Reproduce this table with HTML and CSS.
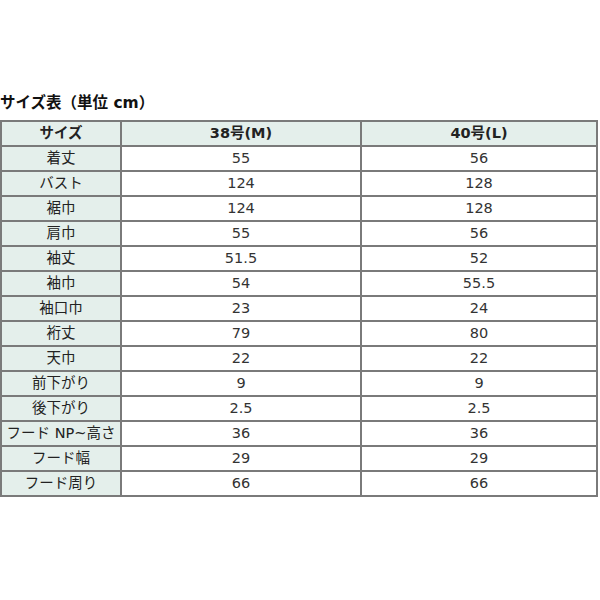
FILE: index.html
```html
<!DOCTYPE html>
<html lang="ja">
<head>
<meta charset="utf-8">
<title>サイズ表</title>
<link rel="stylesheet" href="styles.css">
</head>
<body>
<div class="page">
  <h2 class="title">サイズ表（単位 cm）</h2>
  <table class="size-table">
    <thead>
      <tr><th class="label">サイズ</th><th>38号(M)</th><th>40号(L)</th></tr>
    </thead>
    <tbody>
      <tr><th class="label">着丈</th><td>55</td><td>56</td></tr>
      <tr><th class="label">バスト</th><td>124</td><td>128</td></tr>
      <tr><th class="label">裾巾</th><td>124</td><td>128</td></tr>
      <tr><th class="label">肩巾</th><td>55</td><td>56</td></tr>
      <tr><th class="label">袖丈</th><td>51.5</td><td>52</td></tr>
      <tr><th class="label">袖巾</th><td>54</td><td>55.5</td></tr>
      <tr><th class="label">袖口巾</th><td>23</td><td>24</td></tr>
      <tr><th class="label">裄丈</th><td>79</td><td>80</td></tr>
      <tr><th class="label">天巾</th><td>22</td><td>22</td></tr>
      <tr><th class="label">前下がり</th><td>9</td><td>9</td></tr>
      <tr><th class="label">後下がり</th><td>2.5</td><td>2.5</td></tr>
      <tr><th class="label">フード NP~高さ</th><td>36</td><td>36</td></tr>
      <tr><th class="label">フード幅</th><td>29</td><td>29</td></tr>
      <tr><th class="label">フード周り</th><td>66</td><td>66</td></tr>
    </tbody>
  </table>
</div>
</body>
</html>
```

FILE: styles.css
```css
html, body {
  margin: 0;
  padding: 0;
  background: #ffffff;
}
body {
  font-family: "DejaVu Sans", "Noto Sans CJK JP", sans-serif;
  color: #222222;
}
.page {
  padding-top: 93px;
  width: 598px;
}
.title {
  margin: 0 0 6px 0;
  font-size: 15.5px;
  font-weight: bold;
  line-height: 21px;
  color: #111111;
}
.size-table {
  border-collapse: collapse;
  width: 598px;
  table-layout: fixed;
  font-size: 14.5px;
}
.size-table th,
.size-table td {
  border: 2px solid #7a7a7a;
  height: 23px;
  padding: 0;
  text-align: center;
  vertical-align: middle;
  line-height: 17px;
}
.size-table .label {
  width: 118px;
  background: #e4efeb;
  font-weight: normal;
  white-space: nowrap;
}
.size-table thead th,
.size-table thead th.label {
  background: #e4efeb;
  font-weight: bold;
}
.size-table thead th:nth-child(2) {
  width: 238px;
}
.size-table td {
  font-weight: normal;
  color: #333333;
}
```
